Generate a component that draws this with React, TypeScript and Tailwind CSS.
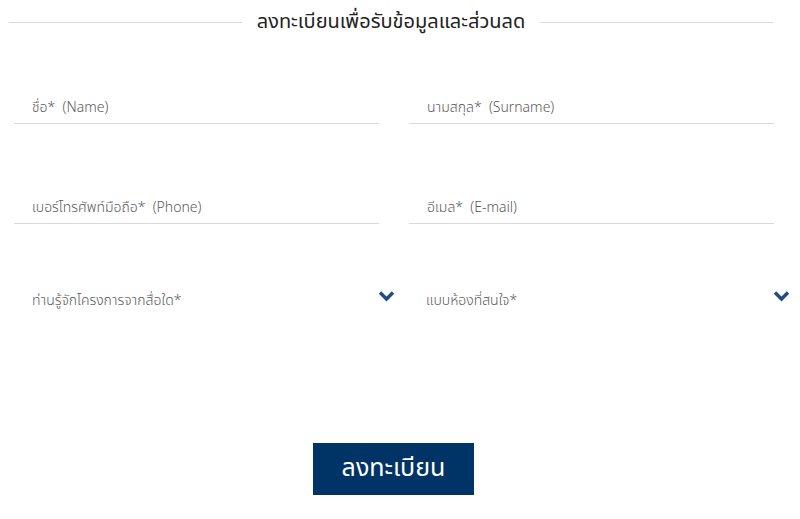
import React from "react";

const font = { fontFamily: '"Noto Sans Thai", "Noto Sans", "Liberation Sans", sans-serif' };

function Field({ label }: { label: string }) {
  return (
    <div className="h-[36px] border-b border-[#d9d9d9] flex items-center pt-[3px] pl-[18px] text-[14px] text-[#5a5a5a] font-light whitespace-pre">
      {label}
    </div>
  );
}

function Select({ label }: { label: string }) {
  return (
    <div className="relative h-[36px] flex items-center pt-[2px] pl-[18px] text-[14px] text-[#5a5a5a] font-light">
      <span>{label}</span>
      <svg
        className="absolute -right-[16px] top-[9px]"
        width="17"
        height="12"
        viewBox="0 0 17 12"
      >
        <path d="M2 2.5 L8.5 9 L15 2.5" fill="none" stroke="#1f4b87" strokeWidth="3.4" />
      </svg>
    </div>
  );
}

export default function App() {
  return (
    <div className="w-[800px] h-[519px] bg-white" style={font}>
      <div className="h-[44px] flex items-center pl-[9px] pr-[27px]">
        <div className="flex-1 h-px bg-[#d9d9d9]" />
        <div className="px-[15px] text-[20px] text-[#222] leading-none">ลงทะเบียนเพื่อรับข้อมูลและส่วนลด</div>
        <div className="flex-1 h-px bg-[#d9d9d9]" />
      </div>
      <div className="px-[14px] pr-[26px] grid grid-cols-2 gap-x-[30px] mt-[44px]">
        <Field label="ชื่อ*  (Name)" />
        <Field label="นามสกุล*  (Surname)" />
      </div>
      <div className="px-[14px] pr-[26px] grid grid-cols-2 gap-x-[30px] mt-[64px]">
        <Field label="เบอร์โทรศัพท์มือถือ*  (Phone)" />
        <Field label="อีเมล*  (E-mail)" />
      </div>
      <div className="px-[14px] pr-[26px] grid grid-cols-2 gap-x-[30px] mt-[57px]">
        <Select label="ท่านรู้จักโครงการจากสื่อใด*" />
        <div className="-ml-[1px]">
          <Select label="แบบห้องที่สนใจ*" />
        </div>
      </div>
      <div className="flex justify-center pr-[13px] mt-[126px]">
        <button className="w-[161px] h-[52px] bg-[#003366] text-white text-[25px] flex items-center justify-center">
          ลงทะเบียน
        </button>
      </div>
    </div>
  );
}
